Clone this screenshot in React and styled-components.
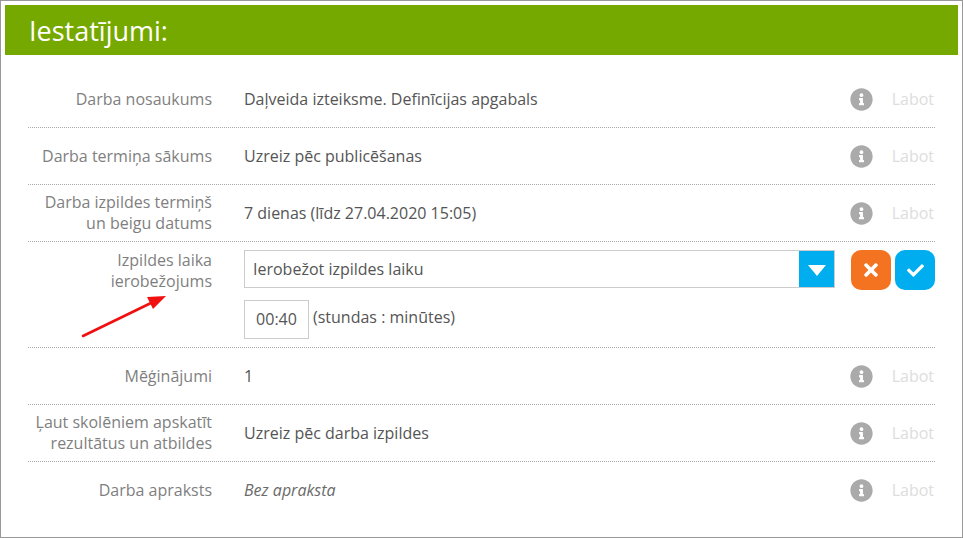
import React from 'react';
import styled, { createGlobalStyle } from 'styled-components';
import { FaInfoCircle, FaTimes, FaCheck } from 'react-icons/fa';

const GlobalStyle = createGlobalStyle`
  html, body {
    margin: 0;
    padding: 0;
    background: #fff;
  }
  * {
    box-sizing: border-box;
  }
`;

const Frame = styled.div`
  position: relative;
  width: 963px;
  height: 538px;
  padding: 4px;
  border: 1px solid #999;
  background: #fff;
  font-family: "Open Sans", sans-serif;
  font-size: 16px;
  color: #555;
  overflow: hidden;
`;

const Header = styled.div`
  display: flex;
  align-items: center;
  height: 50px;
  padding-left: 24px;
  background: #76a900;
  color: #fff;
  font-size: 27px;
`;

const List = styled.div`
  margin-top: 16px;
  padding: 0 23px;
`;

const Row = styled.div`
  display: grid;
  grid-template-columns: 216px 1fr 100px;
  align-items: ${(props) => (props.$top ? 'start' : 'center')};
  height: ${(props) => (props.$tall ? 106 : props.$last ? 56 : 57)}px;
  padding-top: ${(props) => (props.$tall ? 8 : 0)}px;
  border-bottom: ${(props) => (props.$last ? 'none' : '1px dotted #aaa')};
`;

const Label = styled.div`
  padding-right: 32px;
  color: #7f7f7f;
  text-align: right;
  line-height: 21px;
`;

const Value = styled.div`
  color: ${(props) => (props.$muted ? '#6a6a6a' : '#555')};
  font-style: ${(props) => (props.$muted ? 'italic' : 'normal')};
`;

const Actions = styled.div`
  display: flex;
  align-items: center;
  justify-content: space-between;
  padding-left: 15px;
`;

const InfoIcon = styled(FaInfoCircle)`
  width: 23px;
  height: 23px;
  color: #aaa;
`;

const EditLink = styled.span`
  color: #ddd;
  margin-right: 1px;
`;

const Editor = styled.div`
  display: flex;
  flex-direction: column;
  gap: 12px;
`;

const Select = styled.div`
  display: flex;
  align-items: stretch;
  justify-content: space-between;
  height: 38px;
  border: 1px solid #ccc;
  padding-left: 8px;
`;

const SelectText = styled.span`
  align-self: center;
`;

const Caret = styled.span`
  display: flex;
  align-items: center;
  justify-content: center;
  width: 35px;
  padding-top: 2px;
  background: #00adef;
`;

const CaretShape = styled.span`
  width: 0;
  height: 0;
  border-left: 9px solid transparent;
  border-right: 9px solid transparent;
  border-top: 11px solid #fff;
`;

const TimeRow = styled.div`
  display: flex;
  align-items: center;
  gap: 4px;
`;

const TimeBox = styled.div`
  display: flex;
  align-items: center;
  justify-content: center;
  width: 65px;
  height: 39px;
  padding-bottom: 2px;
  border: 1px solid #ccc;
`;

const TimeHint = styled.span`
  position: relative;
  top: -3px;
`;

const Buttons = styled.div`
  display: flex;
  gap: 4px;
  padding-left: 16px;
`;

const RoundButton = styled.button`
  display: flex;
  align-items: center;
  justify-content: center;
  width: 40px;
  height: 40px;
  padding: 0;
  border: none;
  border-radius: 10px;
  background: ${(props) => props.$color};
  color: #fff;
  font-size: ${(props) => props.$iconSize}px;
`;

const Arrow = styled.svg`
  position: absolute;
  left: 76px;
  top: 290px;
`;

const rows = [
  { label: 'Darba nosaukums', value: 'Daļveida izteiksme. Definīcijas apgabals' },
  { label: 'Darba termiņa sākums', value: 'Uzreiz pēc publicēšanas' },
  { label: <>Darba izpildes termiņš<br />un beigu datums</>, value: '7 dienas (līdz 27.04.2020 15:05)' },
];

const rowsBelow = [
  { label: 'Mēģinājumi', value: '1' },
  { label: <>Ļaut skolēniem apskatīt<br />rezultātus un atbildes</>, value: 'Uzreiz pēc darba izpildes' },
  { label: 'Darba apraksts', value: 'Bez apraksta', muted: true, last: true },
];

function InfoRow({ label, value, muted, last }) {
  return (
    <Row $last={last}>
      <Label>{label}</Label>
      <Value $muted={muted}>{value}</Value>
      <Actions>
        <InfoIcon />
        <EditLink>Labot</EditLink>
      </Actions>
    </Row>
  );
}

export default function App() {
  return (
    <Frame>
      <GlobalStyle />
      <Header>Iestatījumi:</Header>
      <List>
        {rows.map((row, i) => (
          <InfoRow key={i} {...row} />
        ))}
        <Row $tall $top>
          <Label>Izpildes laika<br />ierobežojums</Label>
          <Editor>
            <Select>
              <SelectText>Ierobežot izpildes laiku</SelectText>
              <Caret><CaretShape /></Caret>
            </Select>
            <TimeRow>
              <TimeBox>00:40</TimeBox>
              <TimeHint>(stundas : minūtes)</TimeHint>
            </TimeRow>
          </Editor>
          <Buttons>
            <RoundButton $color="#f47321" $iconSize={20}><FaTimes /></RoundButton>
            <RoundButton $color="#00adef" $iconSize={17}><FaCheck /></RoundButton>
          </Buttons>
        </Row>
        {rowsBelow.map((row, i) => (
          <InfoRow key={i} {...row} />
        ))}
      </List>
      <Arrow width="96" height="52" viewBox="0 0 96 52">
        <path d="M6 45 L74 12" stroke="#f01010" strokeWidth="2.6" strokeLinecap="round" fill="none" />
        <path d="M89 5 L70 6 L76 18 Z" fill="#f01010" />
      </Arrow>
    </Frame>
  );
}
